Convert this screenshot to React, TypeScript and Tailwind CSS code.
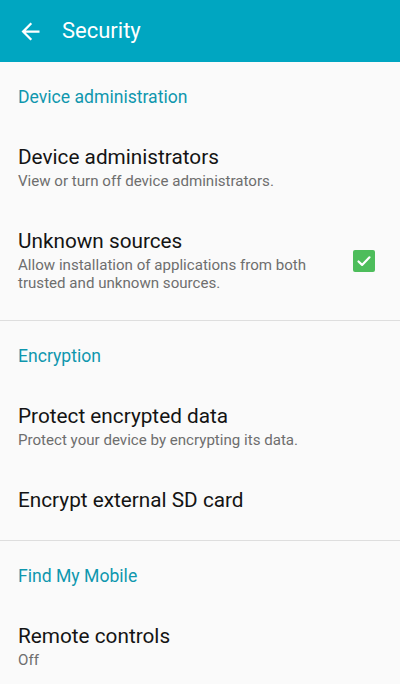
import React from 'react'

const font = { fontFamily: 'Roboto, "Noto Sans", sans-serif' }

// Section heading in teal
const SectionHeader = ({ title }: { title: string }) => (
  <div className="pl-[18px] pt-[23px] pb-[17px] text-[17.6px] leading-[24px] text-[#0f97ae]">{title}</div>
)

const Item = ({ title, sub, checked }: { title: string; sub?: string[]; checked?: boolean }) => (
  <div className="flex items-center pl-[18px] pr-[25px] pt-[19px] pb-[20px]">
    <div className="flex-1">
      <div className="text-[20.75px] leading-[24px] text-[#141414]">{title}</div>
      {sub && (
        <div className="mt-[3px] text-[15.1px] leading-[18px] text-[#6e6e6e]">
          {sub.map((s) => (
            <div key={s}>{s}</div>
          ))}
        </div>
      )}
    </div>
    {checked && (
      <div className="ml-4 flex h-[22px] w-[22px] items-center justify-center rounded-[2px] bg-[#4dbd5b]">
        <svg width="16" height="16" viewBox="0 0 16 16" fill="none">
          <path d="M2.5 8.5l3.6 3.4L13.5 4.3" stroke="white" strokeWidth="2.2" strokeLinecap="round" strokeLinejoin="round" />
        </svg>
      </div>
    )}
  </div>
)

const Divider = () => <div className="h-px bg-[#dedede]" />

export default function App() {
  return (
    <div className="h-[684px] w-[400px] overflow-hidden bg-[#fafafa]" style={font}>
      <div className="flex h-[62px] items-center bg-[#00a6c1] text-white">
        <svg className="ml-[17px]" width="27" height="27" viewBox="0 0 24 24" fill="white">
          <path d="M20 11H7.83l5.59-5.59L12 4l-8 8 8 8 1.41-1.41L7.83 13H20v-2z" />
        </svg>
        <span className="ml-[18px] text-[22px] leading-[28px]">Security</span>
      </div>

      <div className="pb-[8px]">
        <SectionHeader title="Device administration" />
        <Item title="Device administrators" sub={['View or turn off device administrators.']} />
        <Item
          title="Unknown sources"
          sub={['Allow installation of applications from both', 'trusted and unknown sources.']}
          checked
        />
      </div>
      <Divider />

      <div className="pb-[8px]">
        <SectionHeader title="Encryption" />
        <Item title="Protect encrypted data" sub={['Protect your device by encrypting its data.']} />
        <Item title="Encrypt external SD card" />
      </div>
      <Divider />

      <div>
        <SectionHeader title="Find My Mobile" />
        <Item title="Remote controls" sub={['Off']} />
      </div>
    </div>
  )
}
